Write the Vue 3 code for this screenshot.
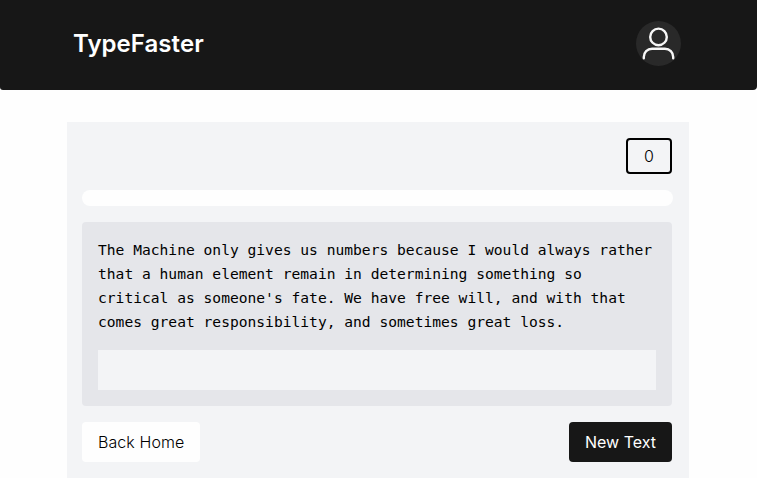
<script setup>
import { ref } from 'vue'

const score = ref(0)
const typed = ref('')
const lines = [
  'The Machine only gives us numbers because I would always rather',
  'that a human element remain in determining something so',
  "critical as someone's fate. We have free will, and with that",
  'comes great responsibility, and sometimes great loss.',
]
</script>

<template>
  <div class="page">
    <header class="topbar">
      <h1 class="brand">TypeFaster</h1>
      <div class="avatar">
        <svg viewBox="0 0 45 45" width="45" height="45" fill="none" stroke="#f7f7f7" stroke-width="2.4" stroke-linecap="round">
          <circle cx="22.5" cy="15.9" r="8.3" />
          <path d="M7.8 37.2v-1.2c0-4.8 3.5-8.3 8.3-8.3h12.8c4.8 0 8.3 3.5 8.3 8.3v1.2" />
        </svg>
      </div>
    </header>
    <main class="panel">
      <div class="score-row">
        <div class="score">{{ score }}</div>
      </div>
      <div class="progress"></div>
      <section class="exercise">
        <p class="quote">
          <span v-for="line in lines" :key="line" class="line">{{ line }}</span>
        </p>
        <input v-model="typed" class="entry" type="text" />
      </section>
      <footer class="actions">
        <button class="btn light">Back Home</button>
        <button class="btn dark">New Text</button>
      </footer>
    </main>
  </div>
</template>

<style>
body {
  background: #fefefe;
}
</style>

<style scoped>
.page {
  box-sizing: border-box;
  height: 478px;
  overflow: hidden;
  font-family: Inter, "Liberation Sans", sans-serif;
  font-size: 16px;
  line-height: 24px;
  color: #000;
}
.topbar {
  box-sizing: border-box;
  height: 90px;
  padding: 0 76px 3px 73px;
  display: flex;
  align-items: center;
  justify-content: space-between;
  background: #171717;
  border-radius: 0 0 4px 3px;
}
.brand {
  margin: 0;
  font-size: 24px;
  line-height: 32px;
  font-weight: 600;
  letter-spacing: 0.05px;
  color: #fff;
}
.avatar {
  width: 45px;
  height: 45px;
  border-radius: 50%;
  background: #292929;
}
.avatar svg {
  display: block;
}
.panel {
  box-sizing: border-box;
  width: 622px;
  margin: 32px 0 0 67px;
  padding: 16px 17px 16px 15px;
  display: flex;
  flex-direction: column;
  gap: 16px;
  background: #f3f4f6;
}
.score-row {
  display: flex;
  justify-content: flex-end;
}
.score {
  box-sizing: border-box;
  width: 46px;
  height: 36px;
  border: 2px solid #000;
  border-radius: 4px;
  line-height: 33px;
  text-align: center;
  font-weight: 300;
}
.progress {
  height: 16px;
  border-radius: 8px;
  background: #fefefe;
  margin-right: -1px;
}
.exercise {
  padding: 16px;
  border-radius: 4px;
  background: #e5e6ea;
}
.quote {
  margin: 0 0 16px;
  font-family: "DejaVu Sans Mono", monospace;
  font-size: 14.61px;
}
.line {
  display: block;
  white-space: nowrap;
}
.entry {
  display: block;
  box-sizing: border-box;
  width: 100%;
  height: 40px;
  padding: 8px;
  border: 0;
  outline: 0;
  background: #f3f4f6;
  font: inherit;
}
.actions {
  display: flex;
  justify-content: space-between;
}
.btn {
  height: 40px;
  padding: 0 16px;
  border: 0;
  border-radius: 4px;
  font: inherit;
  white-space: nowrap;
}
.light {
  background: #fefefe;
  color: #000;
  font-weight: 300;
  letter-spacing: 0.08px;
}
.dark {
  background: #171717;
  color: #fff;
}
</style>
